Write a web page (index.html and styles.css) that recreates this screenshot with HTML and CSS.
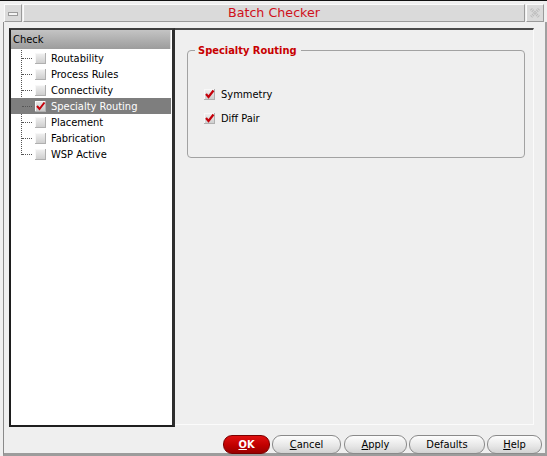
FILE: index.html
```html
<!DOCTYPE html>
<html>
<head>
<meta charset="utf-8">
<link rel="stylesheet" href="styles.css">
</head>
<body>
<div class="frame">
  <div class="titlebar">
    <div class="tb-btn"><span class="minus"></span></div>
    <div class="title">Batch Checker</div>
    <div class="tb-btn tb-close">
      <svg width="16" height="15" viewBox="0 0 16 15"><path d="M4 3 L12 11 M12 3 L4 11" stroke="#bbb" stroke-width="3" stroke-dasharray="1 1" fill="none"/></svg>
    </div>
  </div>
  <div class="client">
    <div class="panes">
      <div class="tree">
        <div class="tree-head">Check</div>
        <div class="tree-body">
          <div class="tree-line"></div>
          <div class="row"><span class="dash"></span><span class="cb"></span><span class="lbl">Routability</span></div>
          <div class="row"><span class="dash"></span><span class="cb"></span><span class="lbl">Process Rules</span></div>
          <div class="row"><span class="dash"></span><span class="cb"></span><span class="lbl">Connectivity</span></div>
          <div class="row sel"><span class="dash"></span><span class="cb"><svg width="11" height="11" viewBox="0 0 11 11"><path d="M2 5 L4.5 8 L9.5 1.5" stroke="#c4000a" stroke-width="2" fill="none"/></svg></span><span class="lbl">Specialty Routing</span></div>
          <div class="row"><span class="dash"></span><span class="cb"></span><span class="lbl">Placement</span></div>
          <div class="row"><span class="dash"></span><span class="cb"></span><span class="lbl">Fabrication</span></div>
          <div class="row"><span class="dash"></span><span class="cb"></span><span class="lbl">WSP Active</span></div>
        </div>
      </div>
      <div class="detail">
        <fieldset class="group">
          <legend>Specialty Routing</legend>
          <div class="opt"><span class="cb"><svg width="11" height="11" viewBox="0 0 11 11"><path d="M2 5 L4.5 8 L9.5 1.5" stroke="#c4000a" stroke-width="2.2" fill="none"/></svg></span><span>Symmetry</span></div>
          <div class="opt"><span class="cb"><svg width="11" height="11" viewBox="0 0 11 11"><path d="M2 5 L4.5 8 L9.5 1.5" stroke="#c4000a" stroke-width="2.2" fill="none"/></svg></span><span>Diff Pair</span></div>
        </fieldset>
      </div>
    </div>
    <div class="buttons">
      <button class="btn ok"><u>O</u>K</button>
      <button class="btn w-cancel"><u>C</u>ancel</button>
      <button class="btn w-apply"><u>A</u>pply</button>
      <button class="btn w-def">Defaults</button>
      <button class="btn w-help"><u>H</u>elp</button>
    </div>
  </div>
</div>
</body>
</html>
```
FILE: styles.css
```css
* { box-sizing: border-box; }
html, body { margin: 0; padding: 0; }
body {
  width: 547px; height: 456px; overflow: hidden;
  background: #efefef;
  font-family: "DejaVu Sans Condensed", "DejaVu Sans", sans-serif;
  font-stretch: condensed;
  font-size: 11px;
  color: #000;
}
.frame {
  height: 456px;
  border-top: 1px solid #111;
  padding: 3px 0 0 3px;
  background: #efefef;
}
.titlebar {
  display: flex;
  height: 18px;
  margin: 0 3px 0 1px;
  gap: 1px;
}
.tb-btn {
  width: 18px; height: 18px;
  background: #dadada;
  border: 1px solid;
  border-color: #fafafa #9a9a9a #9a9a9a #fafafa;
  display: flex; align-items: center; justify-content: center;
}
.minus {
  width: 10px; height: 4px;
  background: #f4f4f4;
  border: 1px solid #9a9a9a;
  margin-top: 2px;
}
.title {
  flex: 1;
  background: #dadada;
  border: 1px solid;
  border-color: #fafafa #9a9a9a #9a9a9a #fafafa;
  text-align: center;
  color: #d0101a;
  font-family: "DejaVu Sans", sans-serif;
  font-stretch: normal;
  font-size: 12.7px;
  line-height: 16px;
}
.client {
  height: 434px;
  margin-top: 0;
  border-left: 1px solid #8a8a8a;
  border-right: 2px solid #a0a0a0;
  border-bottom: 3px solid #9c9c9c;
  padding: 6px 11px 0 5px;
}
.panes {
  display: flex;
  height: 399px;
  align-items: flex-start;
}
.tree {
  width: 166px;
  height: 399px;
  background: #fff;
  border-top: 2px solid #3c3c3c;
  border-left: 2px solid #1e1e1e;
  border-right: 3px solid #2e2e2e;
  border-bottom: 2px solid #1e1e1e;
  position: relative;
}
.tree-head {
  height: 19px;
  background: linear-gradient(#c4c4c4, #9c9c9c);
  border-right: 1px solid #e0e0e0;
  margin-right: 1px;
  padding-left: 2px;
  line-height: 20px;
  color: #000;
}
.tree-body {
  position: relative;
  padding-top: 1px;
}
.tree-line {
  position: absolute;
  left: 10px; top: 1px;
  height: 105px;
  border-left: 1px dotted #555;
}
.row {
  height: 16px;
  display: flex;
  align-items: center;
  position: relative;
  margin-right: 1px;
}
.row.sel { background: #7e7e7e; color: #fff; }
.dash {
  width: 10px;
  margin-left: 11px;
  border-top: 1px dotted #555;
}
.cb {
  width: 11px; height: 11px;
  margin-left: 3px;
  background: linear-gradient(#f2f2f2, #cbcbcb);
  box-shadow: inset -1px -1px 0 #b0b0b0, inset 1px 1px 0 #f8f8f8;
  display: inline-flex;
  flex: none;
}
.cb svg { display: block; }
.lbl { margin-left: 5px; white-space: nowrap; }
.row.sel .cb { background: linear-gradient(#e8e8e8, #c4c4c4); }
.detail {
  width: 359px;
  height: 397px;
  border-top: 2px solid #4a4a4a;
  border-right: 1px solid #fbfbfb;
  border-bottom: 1px solid #fbfbfb;
  padding: 14px 0 0 12px;
}
.group {
  margin: 0;
  width: 338px;
  height: 114px;
  border: 1px solid #a2a2a2;
  border-radius: 4px;
  padding: 31px 0 0 16px;
}
.group legend {
  color: #c80000;
  font-weight: bold;
  font-family: "DejaVu Sans Condensed", "DejaVu Sans", sans-serif;
  font-size: 11px;
  padding: 0 4px 0 3px;
  margin-left: -9px;
}
.opt {
  display: flex;
  align-items: center;
  height: 13px;
  margin-bottom: 11px;
}
.opt .cb { margin-left: 0; margin-right: 6px; }
.buttons {
  display: flex;
  justify-content: flex-end;
  gap: 2px;
  margin-top: 8px;
  margin-right: -8px;
}
.btn {
  height: 19px;
  border: 1px solid #8a8a8a;
  border-radius: 9px;
  background: linear-gradient(#fdfdfd, #e6e6e6 60%, #d2d2d2);
  font-family: inherit;
  font-stretch: condensed;
  font-size: 11px;
  color: #000;
  padding: 0;
  line-height: 16px;
}
.btn u { text-decoration: underline; }
.ok {
  width: 47px;
  background: linear-gradient(#e01010, #c00000 55%, #9a0000);
  border-color: #7a0000;
  color: #fff;
  font-weight: bold;
}
.w-cancel { width: 69px; margin-right: 1px; }
.w-apply { width: 63px; }
.w-def { width: 76px; }
.w-help { width: 55px; }
```
